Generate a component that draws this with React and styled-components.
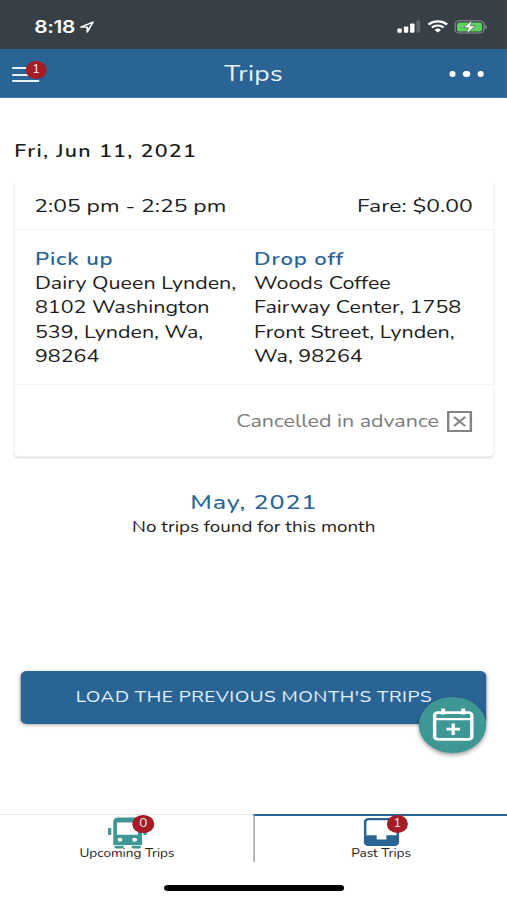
import styled, { createGlobalStyle } from "styled-components";

const GlobalStyle = createGlobalStyle`
  * {
    box-sizing: border-box;
  }
  body {
    margin: 0;
    background: #fff;
    overflow: hidden;
  }
`;

const colors = {
  blue: "#2a6495",
  teal: "#3f9795",
  red: "#a31c26",
  dark: "#373f47",
};

// 414pt wide phone screen, stretched to fill the 507px window
const Screen = styled.div`
  display: flex;
  flex-direction: column;
  position: relative;
  width: 414px;
  height: 900px;
  transform: scaleX(1.2246);
  transform-origin: 0 0;
  background: #fff;
  color: #1c1c1c;
  font-family: "Nunito", "Lato", sans-serif;
`;

const StatusBar = styled.div`
  display: flex;
  align-items: center;
  height: 49px;
  padding: 4px 16px 0 28px;
  background: ${colors.dark};
  color: #fff;
`;

const Clock = styled.span`
  margin-right: 4.3px;
  font-family: "Inter", sans-serif;
  font-size: 17px;
  font-weight: 600;
  line-height: 20px;
  letter-spacing: -0.3px;
`;

const StatusIcons = styled.div`
  display: flex;
  align-items: center;
  gap: 5px;
  margin-left: auto;
`;

const Header = styled.header`
  display: grid;
  grid-template-columns: 60px 1fr 60px;
  align-items: center;
  height: 49px;
  padding: 0 19px 0 10px;
  background: ${colors.blue};
  border-bottom: 1px solid #3f75a1;
`;

const MenuButton = styled.div`
  position: relative;
  display: flex;
  flex-direction: column;
  gap: 4.5px;
  width: 22px;
  margin-top: 3px;
`;

const MenuLine = styled.span`
  height: 2px;
  background: #e6f2fa;
`;

const Badge = styled.span`
  position: absolute;
  top: ${(p) => p.$top}px;
  left: ${(p) => p.$left}px;
  width: 17.5px;
  height: 17.5px;
  border-radius: 50%;
  background: ${colors.red};
  color: #fbe9ea;
  font-size: 11px;
  line-height: 18px;
  text-align: center;
`;

const Title = styled.h1`
  margin: 1px 0 0 9px;
  color: #e8f3fb;
  font-size: 21.5px;
  font-weight: 400;
  letter-spacing: 0.2px;
  line-height: 26px;
  text-align: center;
`;

const Dots = styled.div`
  display: flex;
  justify-content: flex-end;
  gap: 6.3px;
  margin-top: 1px;
`;

const Dot = styled.span`
  width: 5.2px;
  height: 6px;
  border-radius: 50%;
  background: #fff;
`;

const Main = styled.main`
  flex: 1;
  padding: 41px 10.5px 0 11px;
`;

const DateHeading = styled.h2`
  margin: 0 0 20px;
  padding-left: 0.7px;
  font-size: 17.5px;
  font-weight: 600;
  letter-spacing: 1.05px;
  line-height: 24px;
`;

const Card = styled.section`
  height: 273.5px;
  border: solid #f0f0f0;
  border-width: 0 1.5px 1px;
  border-radius: 0 0 5px 5px;
  box-shadow: 0 2px 2px -1px rgba(0, 0, 0, 0.16);
`;

const CardHead = styled.div`
  display: flex;
  justify-content: space-between;
  align-items: center;
  height: 47px;
  padding: 0 16.5px 0 16px;
  border-bottom: 1.5px solid #f1f1f1;
  font-size: 18.7px;
`;

const Stops = styled.div`
  display: grid;
  grid-template-columns: 179px 1fr;
  height: 155px;
  padding: 16.6px 16.5px 0;
  border-bottom: 1.5px solid #f4f4f4;
`;

const StopTitle = styled.h3`
  margin: 0;
  color: ${colors.blue};
  font-size: 18px;
  font-weight: 600;
  letter-spacing: 0.7px;
  line-height: 24.4px;
`;

const Address = styled.p`
  margin: 0;
  font-size: 17.55px;
  line-height: 24.4px;
  white-space: pre-line;
`;

const CardStatus = styled.div`
  display: flex;
  justify-content: flex-end;
  align-items: center;
  gap: 6.5px;
  height: 71px;
  padding-right: 17px;
  color: #7b7b7b;
  font-size: 17.5px;
  line-height: 24px;
`;

const CancelBox = styled.svg`
  margin-top: 2px;
`;

const Month = styled.h2`
  margin: 32.5px 0 0;
  color: ${colors.blue};
  font-size: 20.5px;
  font-weight: 500;
  letter-spacing: 0.7px;
  line-height: 26px;
  text-align: center;
`;

const Empty = styled.p`
  margin: 0;
  font-size: 15.35px;
  line-height: 24px;
  text-align: center;
`;

const LoadButton = styled.button`
  display: block;
  width: 380.3px;
  height: 53px;
  margin: 132px 0 0 6.2px;
  padding: 0 0 1px;
  border: 0;
  border-radius: 5px;
  background: ${colors.blue};
  box-shadow: 0 1px 3px rgba(0, 0, 0, 0.35);
  color: #e3f1fb;
  font-family: inherit;
  font-size: 15.5px;
  letter-spacing: 0.4px;
  line-height: 24px;
  white-space: nowrap;
`;

const Fab = styled.div`
  position: absolute;
  top: 697px;
  left: 342px;
  display: flex;
  align-items: center;
  justify-content: center;
  width: 55.3px;
  height: 56px;
  padding-bottom: 2px;
  border-radius: 50%;
  background: ${colors.teal};
  box-shadow: 0 2px 4px rgba(0, 0, 0, 0.4);
`;

const Tabs = styled.nav`
  display: grid;
  grid-template-columns: 207.4px 206.6px;
  height: 48px;
`;

const Tab = styled.div`
  display: flex;
  flex-direction: column;
  align-items: center;
  border-top: ${(p) => (p.$active ? `2px solid ${colors.blue}` : "1px solid #e8e8e8")};
  border-left: ${(p) => (p.$active ? "1px solid #8d8d8d" : "0")};
  font-size: 11.1px;
  line-height: 14px;
`;

const TabIcon = styled.div`
  position: relative;
  height: ${(p) => p.$height}px;
  padding-top: 2px;

  svg {
    display: block;
  }
`;

const HomeArea = styled.div`
  display: flex;
  justify-content: center;
  height: 38px;
  padding-top: 23px;
`;

const HomeBar = styled.div`
  width: 147.5px;
  height: 6px;
  margin-left: 1px;
  border-radius: 3px;
  background: #000;
`;

const stops = [
  { title: "Pick up", address: "Dairy Queen Lynden,\n8102 Washington\n539, Lynden, Wa,\n98264" },
  { title: "Drop off", address: "Woods Coffee\nFairway Center, 1758\nFront Street, Lynden,\nWa, 98264" },
];

const LocationIcon = () => (
  <svg width="12" height="12" viewBox="0 0 12 12">
    <path d="M1 6.1 10.9 1.1 6.3 11V6.1Z" fill="none" stroke="#fff" strokeWidth="1.4" strokeLinejoin="round" />
  </svg>
);

const SignalIcon = () => (
  <svg width="20" height="13" viewBox="0 0 20 13" fill="#fff">
    <rect x="0.5" y="8.5" width="3.6" height="4.2" rx="0.9" />
    <rect x="5.8" y="6.4" width="3.6" height="6.3" rx="0.9" />
    <rect x="10.9" y="3.4" width="3.6" height="9.3" rx="0.9" />
    <rect x="16" y="0.4" width="3.2" height="12.3" rx="0.9" fill="#5d666d" />
  </svg>
);

const WifiIcon = () => (
  <svg width="17" height="13" viewBox="0 0 17 13" fill="none" stroke="#fff">
    <path d="M0.9 4.5a10.8 10.8 0 0 1 15.2 0" strokeWidth="2.2" />
    <path d="M3.7 7.5a6.8 6.8 0 0 1 9.6 0" strokeWidth="2" />
    <path d="M8.5 12.6 5.9 9.9a3.7 3.7 0 0 1 5.2 0Z" fill="#fff" stroke="none" />
  </svg>
);

const BatteryIcon = () => (
  <svg width="27" height="14" viewBox="0 0 27 14">
    <rect x="0.6" y="0.8" width="23.6" height="12.2" rx="3.4" fill="none" stroke="#8a9095" />
    <rect x="2.2" y="2.4" width="20.4" height="9" rx="2" fill="#5fd160" />
    <path d="M25.2 5v4c1.8-.5 1.8-3.5 0-4Z" fill="#8a9095" />
    <path d="M14.6 0 7.7 7.7h3.8L10 13.8l7.2-7.9h-4Z" fill="#fff" stroke="#373f47" strokeWidth="0.5" />
  </svg>
);

const CalendarPlusIcon = () => (
  <svg width="34" height="33" viewBox="0 0 34 33" fill="none" stroke="#fff" strokeWidth="2.8">
    <rect x="1.9" y="4.7" width="30.4" height="26.6" rx="2.5" />
    <path d="M1.9 11.2h30.4" strokeWidth="2.3" />
    <path d="M8.9 0.5v6M25.3 0.5v6" strokeWidth="3.2" />
    <path d="M17.1 15.5v11.4M11.6 21.2h11" strokeWidth="2.7" />
  </svg>
);

const BusIcon = () => (
  <svg width="32" height="32" viewBox="0 0 32 32" fill={colors.teal}>
    <path
      fillRule="evenodd"
      d="M8 .5h16a4 4 0 0 1 4 4V28H4.500V4.500A4 4 0 0 1 8 .5ZM7.500 5.600v12.200h17.200V5.600ZM10 20.700a2 2 0 1 0 0 4 2 2 0 0 0 0-4ZM22 20.700a2 2 0 1 0 0 4 2 2 0 0 0 0-4Z"
    />
    <rect x="0" y="11" width="2.9" height="7" rx="0.8" />
    <rect x="29.1" y="11" width="2.9" height="7" rx="0.8" />
    <path d="M5.500 28.700H13V30a1.500 1.500 0 0 1-1.500 1.500H7A1.500 1.500 0 0 1 5.500 30ZM19.500 28.700H27V30a1.500 1.500 0 0 1-1.500 1.500H21a1.500 1.500 0 0 1-1.500-1.500Z" />
  </svg>
);

const TrayIcon = () => (
  <svg width="29" height="28" viewBox="0 0 29 28">
    <rect x="1.1" y="1.1" width="26.8" height="26" rx="3" fill="#fff" stroke={colors.blue} strokeWidth="2.2" />
    <path d="M1 17.300h9.600v4.200h7.900v-4.200H28V27H1Z" fill={colors.blue} />
  </svg>
);

export default function App() {
  return (
    <>
      <GlobalStyle />
      <Screen>
        <StatusBar>
          <Clock>8:18</Clock>
          <LocationIcon />
          <StatusIcons>
            <SignalIcon />
            <WifiIcon />
            <BatteryIcon />
          </StatusIcons>
        </StatusBar>
        <Header>
          <MenuButton>
            <MenuLine />
            <MenuLine />
            <MenuLine />
            <Badge $top={-6} $left={10.7}>1</Badge>
          </MenuButton>
          <Title>Trips</Title>
          <Dots>
            <Dot />
            <Dot />
            <Dot />
          </Dots>
        </Header>
        <Main>
          <DateHeading>Fri, Jun 11, 2021</DateHeading>
          <Card>
            <CardHead>
              <span>2:05 pm - 2:25 pm</span>
              <span>Fare: $0.00</span>
            </CardHead>
            <Stops>
              {stops.map((stop) => (
                <div key={stop.title}>
                  <StopTitle>{stop.title}</StopTitle>
                  <Address>{stop.address}</Address>
                </div>
              ))}
            </Stops>
            <CardStatus>
              Cancelled in advance
              <CancelBox width="20.5" height="21" viewBox="0 0 20.5 21" fill="none" stroke="#858585" strokeWidth="2">
                <rect x="1" y="1" width="18.5" height="19" />
                <path d="m5.700 5.900 9.200 9.200m0-9.200-9.200 9.200" />
              </CancelBox>
            </CardStatus>
          </Card>
          <Month>May, 2021</Month>
          <Empty>No trips found for this month</Empty>
          <LoadButton>LOAD THE PREVIOUS MONTH'S TRIPS</LoadButton>
        </Main>
        <Tabs>
          <Tab>
            <TabIcon $height={32}>
              <BusIcon />
              <Badge $top={0} $left={20.5}>0</Badge>
            </TabIcon>
            Upcoming Trips
          </Tab>
          <Tab $active>
            <TabIcon $height={31}>
              <TrayIcon />
              <Badge $top={-1} $left={19}>1</Badge>
            </TabIcon>
            Past Trips
          </Tab>
        </Tabs>
        <HomeArea>
          <HomeBar />
        </HomeArea>
        <Fab>
          <CalendarPlusIcon />
        </Fab>
      </Screen>
    </>
  );
}
